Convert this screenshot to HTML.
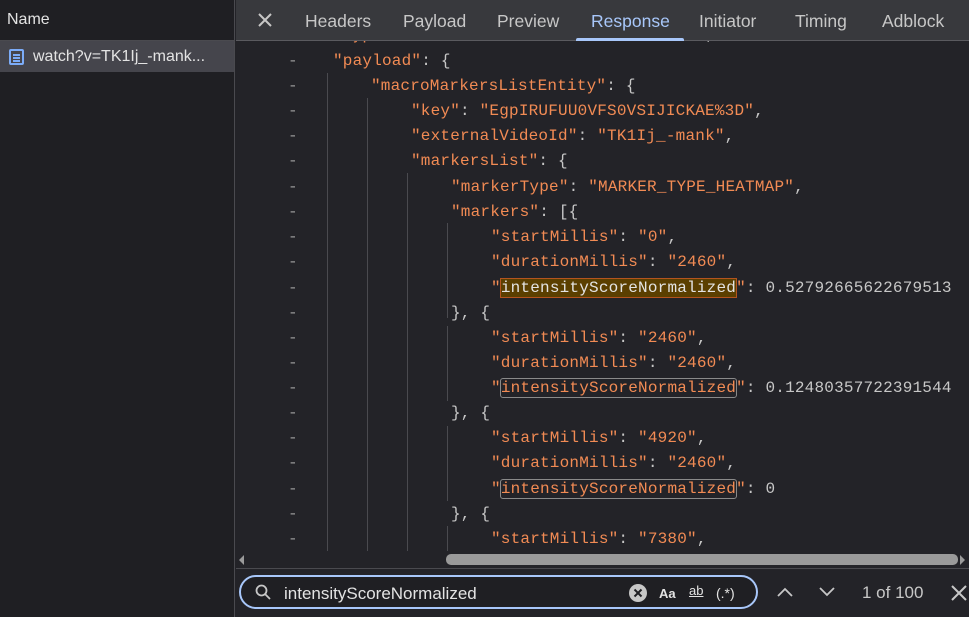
<!DOCTYPE html>
<html><head><meta charset="utf-8"><style>
*{margin:0;padding:0;box-sizing:border-box}
body{width:969px;height:617px;overflow:hidden;background:#232328;font-family:"Liberation Sans",sans-serif;position:relative}
.left{position:absolute;left:0;top:0;width:235px;height:617px;background:#1f1f23;border-right:1px solid #4a4a4f}
.lh{height:41px;border-bottom:1px solid #4a4a4f;color:#e3e3e3;font-size:16px;padding:11px 7px}
.sel{height:31px;background:#45454c;color:#e3e3e3;font-size:16px;padding:7px 0 0 33px;position:relative;white-space:nowrap}
.sel .ic{position:absolute;left:9px;top:8px;width:15px;height:16px;border:2px solid #7cacf8;border-radius:2px}
.sel .ic i{position:absolute;left:2px;right:2px;height:1.5px;background:#7cacf8}
.tabs{position:absolute;left:236px;top:0;right:0;height:41px;background:#38393d;border-bottom:1px solid #5a5a5f}
.tab{position:absolute;top:11px;color:#c7c7c7;font-size:17.5px}
.code{position:absolute;left:236px;top:41px;right:0;height:510px;overflow:hidden;font-family:"Liberation Mono","DejaVu Sans Mono",monospace;font-size:16px;letter-spacing:0.2px;color:#c7c7c7}
.ln{position:absolute;height:25px;white-space:pre;line-height:25px}
.d{position:absolute;left:52px;color:#9a9a9a}
.s{color:#f28b54}
.g{position:absolute;width:1px;background:#4a4a4f}
.hl{background:#5b3f00;outline:1px solid #b3541e;color:#e3e3e3}
.hb{outline:1px solid #8a8a8a;border-radius:2px}
.sb{position:absolute;left:236px;top:551px;right:0;height:18px;border-bottom:1px solid #4a4a4f}
.search{position:absolute;left:239px;top:575px;width:519px;height:34px;border:2px solid #a8c7fa;border-radius:17px;background:#1f1f23;color:#e3e3e3;font-size:17px}
</style></head><body>
<div class="left">
<div class="lh">Name</div>
<div class="sel"><span class="ic"><i style="top:3px"></i><i style="top:6px"></i><i style="top:9px"></i></span>watch?v=TK1Ij_-mank...</div>
</div>
<div class="tabs">
<svg style="position:absolute;left:22px;top:13px" width="14" height="14"><path d="M1 1L13 13M13 1L1 13" stroke="#c7c7c7" stroke-width="2"/></svg>
<span class="tab" style="left:69px">Headers</span>
<span class="tab" style="left:167px">Payload</span>
<span class="tab" style="left:261px">Preview</span>
<span class="tab" style="left:355px;color:#a8c7fa">Response</span>
<span class="tab" style="left:463px">Initiator</span>
<span class="tab" style="left:559px">Timing</span>
<span class="tab" style="left:646px">Adblock</span>
<div style="position:absolute;left:340px;top:38px;width:108px;height:3px;background:#a8c7fa;border-radius:2px 2px 0 0"></div>
</div>
<div class="code">
<div class="g" style="left:91px;top:32px;height:480px"></div>
<div class="g" style="left:131px;top:57px;height:455px"></div>
<div class="g" style="left:171px;top:132px;height:380px"></div>
<div class="g" style="left:211px;top:182px;height:95px"></div>
<div class="g" style="left:211px;top:285px;height:75px"></div>
<div class="g" style="left:211px;top:385px;height:75px"></div>
<div class="g" style="left:211px;top:485px;height:30px"></div>
<div class="ln" style="top:-18px"><span style="position:absolute;left:97px"><span class="s">"type"</span>: <span class="s">"ENTITY_MUTATION_TYPE_REPLACE"</span>,</span></div>
<div class="ln" style="top:8px"><span class="d">-</span><span style="position:absolute;left:97px"><span class="s">"payload"</span>: {</span></div>
<div class="ln" style="top:33px"><span class="d">-</span><span style="position:absolute;left:135px"><span class="s">"macroMarkersListEntity"</span>: {</span></div>
<div class="ln" style="top:58px"><span class="d">-</span><span style="position:absolute;left:175px"><span class="s">"key"</span>: <span class="s">"EgpIRUFUU0VFS0VSIJICKAE%3D"</span>,</span></div>
<div class="ln" style="top:83px"><span class="d">-</span><span style="position:absolute;left:175px"><span class="s">"externalVideoId"</span>: <span class="s">"TK1Ij_-mank"</span>,</span></div>
<div class="ln" style="top:108px"><span class="d">-</span><span style="position:absolute;left:175px"><span class="s">"markersList"</span>: {</span></div>
<div class="ln" style="top:134px"><span class="d">-</span><span style="position:absolute;left:215px"><span class="s">"markerType"</span>: <span class="s">"MARKER_TYPE_HEATMAP"</span>,</span></div>
<div class="ln" style="top:159px"><span class="d">-</span><span style="position:absolute;left:215px"><span class="s">"markers"</span>: [{</span></div>
<div class="ln" style="top:184px"><span class="d">-</span><span style="position:absolute;left:255px"><span class="s">"startMillis"</span>: <span class="s">"0"</span>,</span></div>
<div class="ln" style="top:209px"><span class="d">-</span><span style="position:absolute;left:255px"><span class="s">"durationMillis"</span>: <span class="s">"2460"</span>,</span></div>
<div class="ln" style="top:235px"><span class="d">-</span><span style="position:absolute;left:255px"><span class="s">"<span class="hl">intensityScoreNormalized</span>"</span>: 0.52792665622679513</span></div>
<div class="ln" style="top:260px"><span class="d">-</span><span style="position:absolute;left:215px">}, {</span></div>
<div class="ln" style="top:285px"><span class="d">-</span><span style="position:absolute;left:255px"><span class="s">"startMillis"</span>: <span class="s">"2460"</span>,</span></div>
<div class="ln" style="top:310px"><span class="d">-</span><span style="position:absolute;left:255px"><span class="s">"durationMillis"</span>: <span class="s">"2460"</span>,</span></div>
<div class="ln" style="top:335px"><span class="d">-</span><span style="position:absolute;left:255px"><span class="s">"<span class="hb">intensityScoreNormalized</span>"</span>: 0.12480357722391544</span></div>
<div class="ln" style="top:360px"><span class="d">-</span><span style="position:absolute;left:215px">}, {</span></div>
<div class="ln" style="top:385px"><span class="d">-</span><span style="position:absolute;left:255px"><span class="s">"startMillis"</span>: <span class="s">"4920"</span>,</span></div>
<div class="ln" style="top:410px"><span class="d">-</span><span style="position:absolute;left:255px"><span class="s">"durationMillis"</span>: <span class="s">"2460"</span>,</span></div>
<div class="ln" style="top:436px"><span class="d">-</span><span style="position:absolute;left:255px"><span class="s">"<span class="hb">intensityScoreNormalized</span>"</span>: 0</span></div>
<div class="ln" style="top:461px"><span class="d">-</span><span style="position:absolute;left:215px">}, {</span></div>
<div class="ln" style="top:486px"><span class="d">-</span><span style="position:absolute;left:255px"><span class="s">"startMillis"</span>: <span class="s">"7380"</span>,</span></div>
</div>
<div class="sb">
<svg style="position:absolute;left:3px;top:4px" width="6" height="10"><path d="M5 0L0 5L5 10Z" fill="#9a9a9a"/></svg>
<div style="position:absolute;left:210px;top:3px;width:512px;height:11px;background:#9a9a9a;border-radius:5px"></div>
<svg style="position:absolute;right:3px;top:4px" width="6" height="10"><path d="M0 0L5 5L0 10Z" fill="#9a9a9a"/></svg>
</div>
<div class="search">
<svg style="position:absolute;left:14px;top:7px" width="16" height="16"><circle cx="6.5" cy="6.5" r="5" stroke="#c7c7c7" stroke-width="1.8" fill="none"/><path d="M10 10L15 15" stroke="#c7c7c7" stroke-width="1.8"/></svg>
<span style="position:absolute;left:43px;top:7px">intensityScoreNormalized</span>
<svg style="position:absolute;left:387px;top:6px" width="20" height="20"><circle cx="10" cy="10" r="9" fill="#c7c7c7"/><path d="M6.5 6.5L13.5 13.5M13.5 6.5L6.5 13.5" stroke="#1f1f23" stroke-width="2"/></svg>
<span style="position:absolute;left:418px;top:9px;font-size:13px;font-weight:bold">Aa</span>
<span style="position:absolute;left:448px;top:6px;font-size:13px;text-decoration:underline">ab</span>
<span style="position:absolute;left:475px;top:8px;font-size:14px">(.*)</span>
</div>
<svg style="position:absolute;left:777px;top:587px" width="16" height="10"><path d="M1 9L8 2L15 9" stroke="#c7c7c7" stroke-width="1.8" fill="none"/></svg>
<svg style="position:absolute;left:819px;top:587px" width="16" height="10"><path d="M1 1L8 8L15 1" stroke="#c7c7c7" stroke-width="1.8" fill="none"/></svg>
<span style="position:absolute;left:862px;top:583px;color:#c7c7c7;font-size:17px">1 of 100</span>
<svg style="position:absolute;left:951px;top:585px" width="16" height="16"><path d="M1 1L15 15M15 1L1 15" stroke="#c7c7c7" stroke-width="2"/></svg>
</body></html>
